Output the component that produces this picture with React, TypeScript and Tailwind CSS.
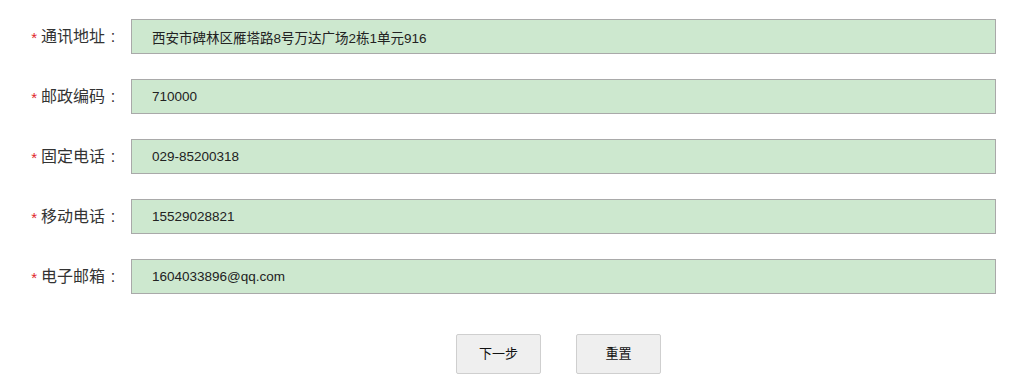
import React, { useState } from "react";

type Field = {
  label: string;
  value: string;
};

const initialFields: Field[] = [
  { label: "通讯地址", value: "西安市碑林区雁塔路8号万达广场2栋1单元916" },
  { label: "邮政编码", value: "710000" },
  { label: "固定电话", value: "029-85200318" },
  { label: "移动电话", value: "15529028821" },
  { label: "电子邮箱", value: "1604033896@qq.com" },
];

const fontStack = "font-['Liberation_Sans','Noto_Sans_CJK_SC',sans-serif]";

export default function App() {
  const [fields, setFields] = useState<Field[]>(initialFields);

  const handleChange = (index: number, value: string) => {
    setFields((prev) => prev.map((f, i) => (i === index ? { ...f, value } : f)));
  };

  const handleReset = () => setFields(initialFields);

  return (
    <div className={`w-[1022px] h-[380px] bg-white pt-[19px] ${fontStack}`}>
      <div className="flex flex-col gap-[25px]">
        {fields.map((field, index) => (
          <div key={field.label} className="flex items-center h-[35px]">
            <label className="w-[121px] shrink-0 flex items-center justify-end text-[16px] text-[#333]">
              <span className="text-[#e0262b] mr-[4px] text-[15px] translate-y-[2px]">*</span>
              {field.label}
              <span className="inline-block w-[16px] text-center">:</span>
            </label>
            <input
              type="text"
              value={field.value}
              onChange={(event) => handleChange(index, event.target.value)}
              className="ml-[10px] w-[865px] h-[35px] border border-[#a9a9a9] bg-[#cde8cf] pl-[20px] text-[13.5px] text-[#222] outline-none"
            />
          </div>
        ))}
      </div>

      <div className="mt-[40px] flex gap-[35px] pl-[456px]">
        <button
          type="button"
          className="w-[85px] h-[40px] rounded-[2px] border border-[#cfcfcf] bg-[#efefef] text-[13px] text-[#111]"
        >
          下一步
        </button>
        <button
          type="button"
          onClick={handleReset}
          className="w-[85px] h-[40px] rounded-[2px] border border-[#cfcfcf] bg-[#efefef] text-[13px] text-[#111]"
        >
          重置
        </button>
      </div>
    </div>
  );
}
